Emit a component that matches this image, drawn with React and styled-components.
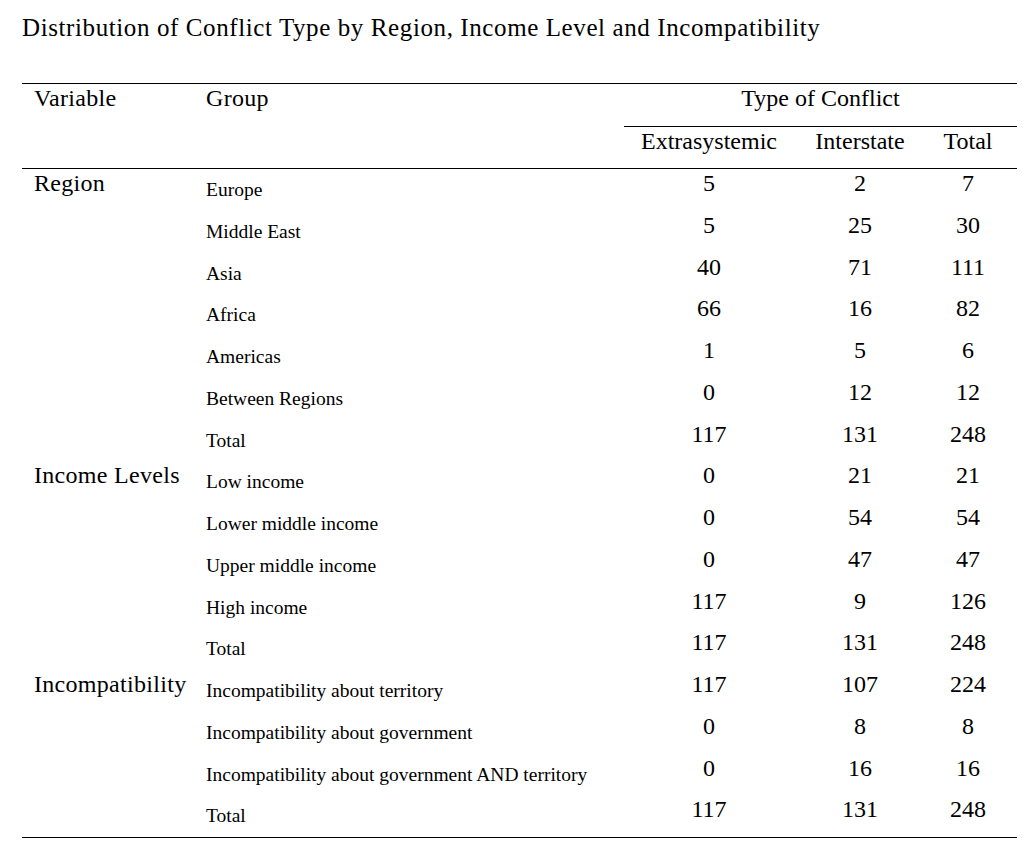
import React from 'react';
import styled, { createGlobalStyle } from 'styled-components';

const GlobalStyle = createGlobalStyle`
  body {
    margin: 0;
    background: #fff;
    color: #000;
    font-family: "Liberation Serif", "Times New Roman", serif;
  }
`;

const Page = styled.div`
  width: 995px;
  padding: 14px 16px 0 22px;
`;

const Title = styled.h1`
  margin: 0;
  font-size: 25px;
  font-weight: 400;
  letter-spacing: 0.6px;
  line-height: 27px;
  height: 27px;
  white-space: nowrap;
`;

const Table = styled.div`
  margin-top: 42px;
  border-top: 1px solid #000;
  border-bottom: 1px solid #000;
`;

const columns = '172px 430px 170px 132px 91px';

const Head = styled.div`
  display: grid;
  grid-template-columns: ${columns};
  grid-template-rows: 43px 41px;
  border-bottom: 1px solid #000;
`;

const HeadCell = styled.div`
  font-size: 24px;
  line-height: 28px;
  letter-spacing: ${(p) => (p.$left ? '0.3px' : '0')};
  padding-left: ${(p) => (p.$left ? '12px' : '0')};
  padding-right: ${(p) => (p.$last ? '7px' : '0')};
  text-align: ${(p) => (p.$left ? 'left' : 'center')};
  grid-row: ${(p) => p.$row};
  grid-column: ${(p) => p.$col};
`;

const SpanCell = styled(HeadCell)`
  border-bottom: 1px solid #000;
  box-sizing: border-box;
`;

const Row = styled.div`
  display: grid;
  grid-template-columns: ${columns};
  height: 41.75px;
`;

const VarCell = styled.div`
  font-size: 24px;
  line-height: 28px;
  letter-spacing: 0.3px;
  padding: 0 0 0 12px;
  white-space: nowrap;
`;

const GroupCell = styled.div`
  font-size: 19.5px;
  line-height: 28px;
  padding: 7px 0 0 12px;
  white-space: nowrap;
`;

const NumCell = styled.div`
  font-size: 24px;
  line-height: 28px;
  padding-right: ${(p) => (p.$last ? '7px' : '0')};
  text-align: center;
`;

const sections = [
  {
    name: 'Region',
    rows: [
      ['Europe', 5, 2, 7],
      ['Middle East', 5, 25, 30],
      ['Asia', 40, 71, 111],
      ['Africa', 66, 16, 82],
      ['Americas', 1, 5, 6],
      ['Between Regions', 0, 12, 12],
      ['Total', 117, 131, 248],
    ],
  },
  {
    name: 'Income Levels',
    rows: [
      ['Low income', 0, 21, 21],
      ['Lower middle income', 0, 54, 54],
      ['Upper middle income', 0, 47, 47],
      ['High income', 117, 9, 126],
      ['Total', 117, 131, 248],
    ],
  },
  {
    name: 'Incompatibility',
    rows: [
      ['Incompatibility about territory', 117, 107, 224],
      ['Incompatibility about government', 0, 8, 8],
      ['Incompatibility about government AND territory', 0, 16, 16],
      ['Total', 117, 131, 248],
    ],
  },
];

export default function App() {
  return (
    <>
      <GlobalStyle />
      <Page>
        <Title>Distribution of Conflict Type by Region, Income Level and Incompatibility</Title>
        <Table>
          <Head>
            <HeadCell $left $row={1} $col={1}>Variable</HeadCell>
            <HeadCell $left $row={1} $col={2}>Group</HeadCell>
            <SpanCell $row={1} $col="3 / 6">Type of Conflict</SpanCell>
            <HeadCell $row={2} $col={3}>Extrasystemic</HeadCell>
            <HeadCell $row={2} $col={4}>Interstate</HeadCell>
            <HeadCell $row={2} $col={5} $last>Total</HeadCell>
          </Head>
          {sections.map((s) =>
            s.rows.map(([group, ext, inter, total], i) => (
              <Row key={s.name + group}>
                <VarCell>{i === 0 ? s.name : ''}</VarCell>
                <GroupCell>{group}</GroupCell>
                <NumCell>{ext}</NumCell>
                <NumCell>{inter}</NumCell>
                <NumCell $last>{total}</NumCell>
              </Row>
            ))
          )}
        </Table>
      </Page>
    </>
  );
}
